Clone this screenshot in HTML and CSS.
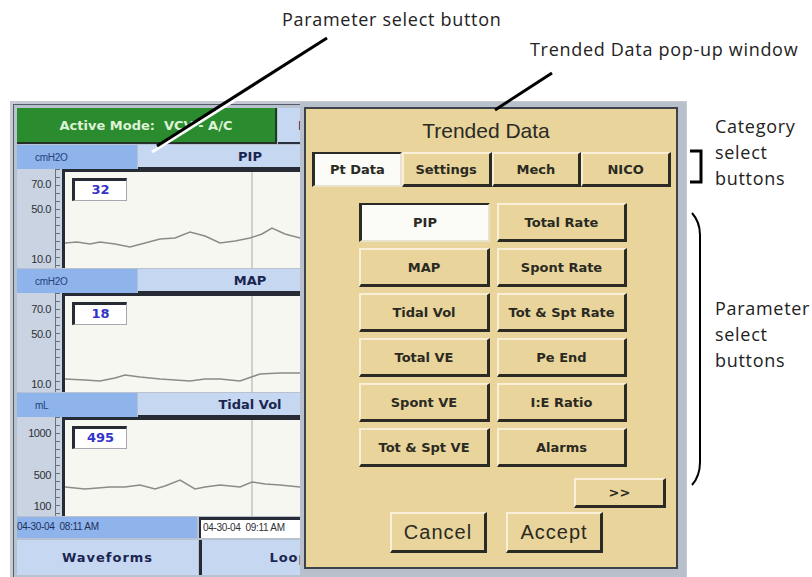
FILE: index.html
```html
<!DOCTYPE html>
<html lang="en">

<head>
    <meta charset="UTF-8">
    <meta name="viewport" content="width=device-width, initial-scale=1.0">
    <title>Trended Data</title>
    <link rel="stylesheet" href="styles.css">
</head>

<body>
    <div class="page">

        <div class="note note-param">Parameter select button</div>
        <div class="note note-popup">Trended Data pop-up window</div>
        <div class="note note-cat">Category<br>select<br>buttons</div>
        <div class="note note-params">Parameter<br>select<br>buttons</div>

        <div class="screen">
            <div class="screen-inner">
                <div class="left">
                    <div class="mode-row">
                        <div class="mode">Active Mode:&nbsp; VCV - A/C</div>
                        <div class="mode-btn">Info</div>
                    </div>

                    <!-- PIP -->
                    <div class="panel">
                        <div class="panel-head">
                            <div class="unit">cmH2O</div>
                            <div class="param">PIP</div>
                        </div>
                        <div class="chart">
                            <div class="axis">
                                <span class="tick-label" style="top:9px">70.0</span>
                                <span class="tick-label" style="top:34px">50.0</span>
                                <span class="tick-label" style="top:84px">10.0</span>
                                <div class="ruler"></div>
                            </div>
                            <div class="plot">
                                <svg class="trace" width="295" height="96" viewBox="0 0 295 96">
                                    <line x1="187" y1="0" x2="187" y2="96" stroke="#a9a9a6" stroke-width="1" />
                                    <polyline fill="none" stroke="#8b8b88" stroke-width="1.5"
                                        points="0,71 12,70 25,72 35,70 50,72 65,75 80,71 95,67 110,66 125,60 140,64 155,71 170,69 185,66 197,62 207,56 220,62 235,66 260,66 295,64" />
                                </svg>
                                <div class="value">32</div>
                            </div>
                        </div>
                    </div>

                    <!-- MAP -->
                    <div class="panel">
                        <div class="panel-head">
                            <div class="unit">cmH2O</div>
                            <div class="param">MAP</div>
                        </div>
                        <div class="chart">
                            <div class="axis">
                                <span class="tick-label" style="top:10px">70.0</span>
                                <span class="tick-label" style="top:35px">50.0</span>
                                <span class="tick-label" style="top:85px">10.0</span>
                                <div class="ruler"></div>
                            </div>
                            <div class="plot">
                                <svg class="trace" width="295" height="96" viewBox="0 0 295 96">
                                    <line x1="187" y1="0" x2="187" y2="96" stroke="#a9a9a6" stroke-width="1" />
                                    <polyline fill="none" stroke="#8b8b88" stroke-width="1.5"
                                        points="0,83 20,84 35,85 50,82 60,79 75,81 95,83 110,84 125,85 140,83 155,83 175,85 195,78 215,77 235,77 295,77" />
                                </svg>
                                <div class="value">18</div>
                            </div>
                        </div>
                    </div>

                    <!-- Tidal Vol -->
                    <div class="panel">
                        <div class="panel-head">
                            <div class="unit">mL</div>
                            <div class="param">Tidal Vol</div>
                        </div>
                        <div class="chart">
                            <div class="axis">
                                <span class="tick-label" style="top:10px">1000</span>
                                <span class="tick-label" style="top:52px">500</span>
                                <span class="tick-label" style="top:83px">100</span>
                                <div class="ruler"></div>
                            </div>
                            <div class="plot">
                                <svg class="trace" width="295" height="96" viewBox="0 0 295 96">
                                    <line x1="187" y1="0" x2="187" y2="96" stroke="#a9a9a6" stroke-width="1" />
                                    <polyline fill="none" stroke="#8b8b88" stroke-width="1.5"
                                        points="0,67 20,69 45,67 60,67 75,65 90,69 100,66 115,60 130,69 140,67 155,65 175,67 187,62 200,64 215,65 235,67 295,67" />
                                </svg>
                                <div class="value">495</div>
                            </div>
                        </div>
                    </div>

                    <div class="time-row">
                        <div class="time-start">04-30-04&nbsp; 08:11 AM</div>
                        <div class="time-end">04-30-04&nbsp; 09:11 AM</div>
                    </div>

                    <div class="nav-row">
                        <div class="nav-btn">Waveforms</div>
                        <div class="nav-btn nav-loops">Loops</div>
                    </div>
                </div>
            </div>

            <!-- pop-up window -->
            <div class="popup">
                <div class="popup-body">
                    <div class="popup-title">Trended Data</div>

                    <div class="tabs">
                        <div class="btn tab sel">Pt Data</div>
                        <div class="btn tab">Settings</div>
                        <div class="btn tab">Mech</div>
                        <div class="btn tab">NICO</div>
                    </div>

                    <div class="grid">
                        <div class="btn sel">PIP</div>
                        <div class="btn">Total Rate</div>
                        <div class="btn">MAP</div>
                        <div class="btn">Spont Rate</div>
                        <div class="btn">Tidal Vol</div>
                        <div class="btn">Tot &amp; Spt Rate</div>
                        <div class="btn">Total VE</div>
                        <div class="btn">Pe End</div>
                        <div class="btn">Spont VE</div>
                        <div class="btn">I:E Ratio</div>
                        <div class="btn">Tot &amp; Spt VE</div>
                        <div class="btn">Alarms</div>
                    </div>

                    <div class="more-row">
                        <div class="btn more">&gt;&gt;</div>
                    </div>

                    <div class="actions">
                        <div class="btn action">Cancel</div>
                        <div class="btn action">Accept</div>
                    </div>
                </div>
            </div>
        </div>

        <svg class="callouts" width="812" height="577" viewBox="0 0 812 577">
            <line x1="329" y1="41" x2="152" y2="152" stroke="#ffffff" stroke-width="3" />
            <line x1="327" y1="38" x2="157" y2="146" stroke="#000000" stroke-width="3" />
            <line x1="552" y1="73" x2="495" y2="110" stroke="#000000" stroke-width="3" />
            <path d="M690 151 H701 V182 H690" fill="none" stroke="#000000" stroke-width="3" />
            <path d="M692 213 Q700 222 700 235 V462 Q700 476 692 485" fill="none" stroke="#000000" stroke-width="2" />
        </svg>
    </div>
</body>

</html>
```

FILE: styles.css
```css
* {
    margin: 0;
    padding: 0;
    box-sizing: border-box;
}

body {
    background: #ffffff;
    width: 812px;
    height: 577px;
    overflow: hidden;
}

.page {
    position: relative;
    width: 812px;
    height: 577px;
    padding: 101px 0 0 10px;
    overflow: hidden;
}

/* callout texts */
.note {
    position: absolute;
    font-family: "Open Sans", sans-serif;
    font-size: 18px;
    line-height: 26px;
    letter-spacing: 0.7px;
    color: #222222;
    white-space: nowrap;
}

.note-param {
    left: 282px;
    top: 6px;
}

.note-popup {
    left: 530px;
    top: 36px;
}

.note-cat {
    left: 715px;
    top: 113px;
}

.note-params {
    left: 715px;
    top: 295px;
}

.callouts {
    position: absolute;
    left: 0;
    top: 0;
    pointer-events: none;
}

/* device screen */
.screen {
    position: relative;
    width: 677px;
    height: 482px;
    padding: 3px;
    background: #c6cbd3;
    font-family: "DejaVu Sans", sans-serif;
}

.screen-inner {
    height: 100%;
    border: 1px solid #555c68;
    padding: 3px;
    background: #b7c1d0;
}

.left {
    width: 345px;
    display: flex;
    flex-direction: column;
}

.mode-row {
    display: flex;
    height: 36px;
    margin-bottom: 1px;
}

.mode {
    width: 260px;
    background: #2a8c2e;
    border-right: 2px solid #1f3a22;
    border-bottom: 2px solid #26302a;
    color: #def2d6;
    font-size: 13px;
    font-weight: bold;
    display: flex;
    align-items: center;
    justify-content: center;
}

.mode-btn {
    flex: 1;
    margin-left: 1px;
    background: #c6d7f2;
    border-bottom: 2px solid #2a3040;
    color: #1b2650;
    font-size: 13px;
    font-weight: bold;
    padding-left: 20px;
    display: flex;
    align-items: center;
}

.panel {
    margin-bottom: 1px;
}

.panel-head {
    display: flex;
    height: 24px;
}

.unit {
    width: 120px;
    background: #8fb4ec;
    color: #24407a;
    font-family: "Liberation Sans", sans-serif;
    font-size: 10px;
    padding-left: 18px;
    display: flex;
    align-items: center;
    letter-spacing: -0.3px;
}

.param {
    flex: 1;
    margin-left: 1px;
    background: #c6d7f2;
    border-bottom: 2px solid #262b36;
    color: #1b2650;
    font-size: 13px;
    font-weight: bold;
    display: flex;
    align-items: center;
    justify-content: center;
}

.chart {
    display: flex;
    height: 99px;
}

.axis {
    position: relative;
    width: 45px;
    background: #c9d3e2;
}

.tick-label {
    position: absolute;
    right: 11px;
    font-family: "Liberation Sans", sans-serif;
    font-size: 11px;
    line-height: 12px;
    letter-spacing: -0.4px;
    color: #2e3036;
}

.ruler {
    position: absolute;
    right: 0;
    top: 0;
    bottom: 0;
    width: 7px;
    border-left: 1px solid #6b717c;
    background: repeating-linear-gradient(to bottom, #6b717c 0 1px, transparent 1px 8px);
    background-size: 4px 100%;
    background-repeat: no-repeat;
}

.plot {
    position: relative;
    flex: 1;
    background: #f7f7f2;
    border-top: 3px solid #262b36;
    border-left: 3px solid #262b36;
    overflow: hidden;
}

.trace {
    position: absolute;
    left: 0;
    top: 0;
}

.value {
    position: relative;
    width: 55px;
    height: 23px;
    margin: 6px 0 0 7px;
    background: #ffffff;
    border-top: 3px solid #262b36;
    border-left: 3px solid #262b36;
    border-right: 1px solid #a7a9ae;
    border-bottom: 1px solid #a7a9ae;
    color: #3434c8;
    font-size: 13px;
    font-weight: bold;
    text-align: center;
    line-height: 18px;
}

.time-row {
    display: flex;
    height: 21px;
    margin-bottom: 2px;
}

.time-start {
    width: 180px;
    background: #8fb4ec;
    color: #1f2f5a;
    font-family: "Liberation Sans", sans-serif;
    font-size: 10px;
    letter-spacing: -0.3px;
    line-height: 19px;
}

.time-end {
    flex: 1;
    margin-left: 2px;
    background: #ffffff;
    border-top: 3px solid #262b36;
    border-left: 2px solid #262b36;
    color: #2e3036;
    font-family: "Liberation Sans", sans-serif;
    font-size: 10px;
    letter-spacing: -0.3px;
    line-height: 15px;
    padding-left: 2px;
    white-space: nowrap;
}

.nav-row {
    display: flex;
    height: 35px;
}

.nav-btn {
    flex: 0 0 181px;
    background: #c6d7f2;
    color: #1b2650;
    font-size: 13px;
    font-weight: bold;
    letter-spacing: 1px;
    display: flex;
    align-items: center;
    justify-content: center;
}

.nav-loops {
    flex-basis: 186px;
    border-left: 3px solid #262b36;
    margin-left: 1px;
}

/* pop-up */
.popup {
    position: absolute;
    left: 290px;
    top: 1px;
    width: 386px;
    height: 475px;
    border-style: solid;
    border-color: #b8c0cc;
    border-width: 5px 8px 8px 4px;
}

.popup-body {
    height: 100%;
    border: 2px solid #3d424b;
    background: #e9d49c;
    display: flex;
    flex-direction: column;
}

.popup-title {
    height: 43px;
    line-height: 43px;
    text-align: center;
    font-family: "Liberation Sans", sans-serif;
    font-size: 21px;
    color: #2a2a26;
    padding-right: 10px;
}

.btn {
    background: #e9d49c;
    border-style: solid;
    border-width: 2px 3px 3px 2px;
    border-color: #f8efd6 #2c2a24 #2c2a24 #f8efd6;
    color: #2a2a22;
    font-size: 13px;
    font-weight: bold;
    display: flex;
    align-items: center;
    justify-content: center;
    white-space: nowrap;
}

.btn.sel {
    background: #fbfbf7;
    border-width: 2px 2px 2px 3px;
    border-color: #2c2a24 #e9e3cd #e9e3cd #2c2a24;
}

.tabs {
    display: grid;
    grid-template-columns: repeat(4, 1fr);
    height: 35px;
    margin: 0 5px 0 6px;
}

.grid {
    display: grid;
    grid-template-columns: 131px 130px;
    grid-auto-rows: 39px;
    column-gap: 7px;
    row-gap: 6px;
    margin: 16px 0 0 53px;
}

.more-row {
    display: flex;
    justify-content: flex-end;
    margin: 11px 10px 0 0;
}

.more {
    width: 92px;
    height: 30px;
}

.actions {
    display: flex;
    gap: 19px;
    margin: 4px 0 0 84px;
}

.action {
    width: 97px;
    height: 41px;
    font-family: "Liberation Sans", sans-serif;
    font-weight: normal;
    font-size: 20px;
    letter-spacing: 1px;
}
```
